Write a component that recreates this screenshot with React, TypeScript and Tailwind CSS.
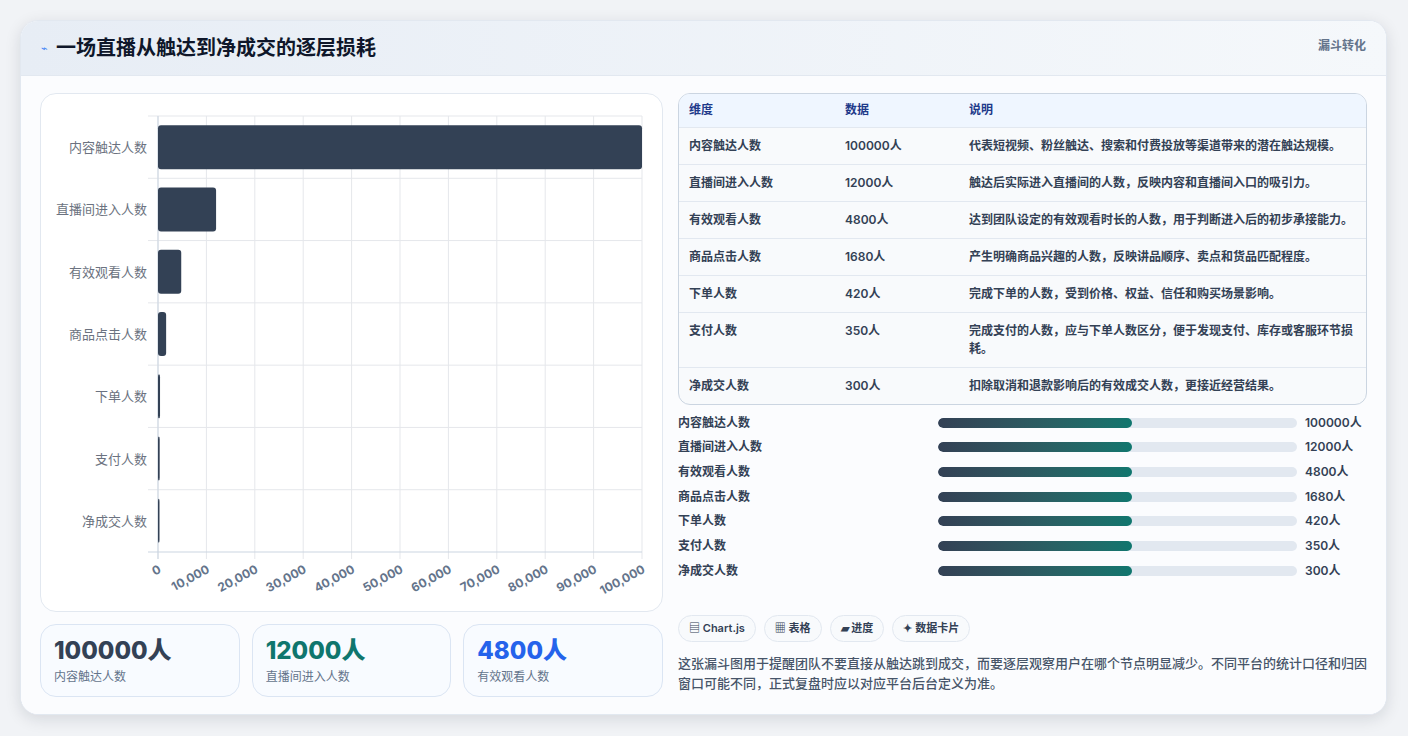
const rows = [
  { name: '内容触达人数', value: 100000, desc: '代表短视频、粉丝触达、搜索和付费投放等渠道带来的潜在触达规模。' },
  { name: '直播间进入人数', value: 12000, desc: '触达后实际进入直播间的人数，反映内容和直播间入口的吸引力。' },
  { name: '有效观看人数', value: 4800, desc: '达到团队设定的有效观看时长的人数，用于判断进入后的初步承接能力。' },
  { name: '商品点击人数', value: 1680, desc: '产生明确商品兴趣的人数，反映讲品顺序、卖点和货品匹配程度。' },
  { name: '下单人数', value: 420, desc: '完成下单的人数，受到价格、权益、信任和购买场景影响。' },
  { name: '支付人数', value: 350, desc: '完成支付的人数，应与下单人数区分，便于发现支付、库存或客服环节损耗。' },
  { name: '净成交人数', value: 300, desc: '扣除取消和退款影响后的有效成交人数，更接近经营结果。' },
];

const font = { fontFamily: 'Inter, "Noto Sans CJK SC", sans-serif' };

function FunnelChart() {
  const x0 = 117, x1 = 601, y0 = 22, y1 = 458;
  const rh = (y1 - y0) / 7;
  const ticks = Array.from({ length: 11 }, (_, i) => i);
  return (
    <svg width="623" height="518" className="block" style={font}>
      {ticks.map((i) => {
        const x = x0 + ((x1 - x0) * i) / 10;
        return <line key={i} x1={x} x2={x} y1={y0} y2={y1 + 7} stroke="#e5e7eb" />;
      })}
      {Array.from({ length: 8 }, (_, i) => (
        <line key={i} x1={x0 - 10} x2={x1} y1={y0 + rh * i} y2={y0 + rh * i} stroke={i === 7 ? '#cbd5e1' : '#e5e7eb'} />
      ))}
      <line x1={x0} x2={x0} y1={y0} y2={y1 + 7} stroke="#cbd5e1" />
      {rows.map((r, i) => {
        const w = Math.max(1.5, ((x1 - x0) * r.value) / 100000);
        const cy = y0 + rh * i + rh / 2;
        return (
          <g key={r.name}>
            <rect x={x0} y={cy - 22} width={w} height={44} rx={3} fill="#334155" />
            <text x={106} y={cy + 5} textAnchor="end" fontSize="13" fill="#6b7280">{r.name}</text>
          </g>
        );
      })}
      {ticks.map((i) => {
        const x = x0 + ((x1 - x0) * i) / 10;
        const label = i === 0 ? '0' : (i * 10000).toLocaleString('en-US');
        return (
          <text key={i} x={x + 4} y={y1 + 20} textAnchor="end" fontSize="12" fontWeight="700" fill="#64748b" transform={`rotate(-28 ${x + 4} ${y1 + 20})`}>
            {label}
          </text>
        );
      })}
    </svg>
  );
}

function StatCard({ value, label, color }: { value: string; label: string; color: string }) {
  return (
    <div className="flex-1 h-[73px] rounded-2xl border border-[#dbe5f3] bg-[#f8fbff] px-[13px] pt-[10px]">
      <div className={`text-[24px] font-extrabold leading-[32px] ${color}`}>{value}</div>
      <div className="text-[12px] text-[#64748b] mt-[1px]">{label}</div>
    </div>
  );
}

export default function App() {
  return (
    <div className="min-h-screen w-[1408px] h-[736px] bg-[#f1f3f6] pt-[20px] px-[20px]" style={font}>
      <div className="w-[1367px] h-[695px] rounded-[18px] bg-white shadow-[0_4px_16px_rgba(15,23,42,0.12)] border border-[#e2e8f0] overflow-hidden flex flex-col">
        <div className="h-[55px] shrink-0 flex items-center justify-between pl-[20px] pr-[20px] bg-gradient-to-r from-[#e7edf5] to-[#f5f8fb] border-b border-[#e2e8f0]">
          <div className="flex items-center gap-[8px]">
            <span className="text-[11px] text-[#3b82f6]">⌁</span>
            <span className="text-[20px] font-bold text-[#0f172a]">一场直播从触达到净成交的逐层损耗</span>
          </div>
          <span className="text-[12px] font-semibold text-[#64748b] self-start mt-[16px]">漏斗转化</span>
        </div>
        <div className="flex-1 bg-[#fbfcfe] flex gap-[15px] px-[19px] pt-[17px]">
          <div className="w-[623px] flex flex-col gap-[12px]">
            <div className="h-[519px] rounded-2xl border border-[#e2e8f0] bg-white">
              <FunnelChart />
            </div>
            <div className="flex gap-[12px]">
              <StatCard value="100000人" label="内容触达人数" color="text-[#334155]" />
              <StatCard value="12000人" label="直播间进入人数" color="text-[#0f766e]" />
              <StatCard value="4800人" label="有效观看人数" color="text-[#2563eb]" />
            </div>
          </div>
          <div className="w-[690px] flex flex-col">
            <div className="rounded-xl border border-[#cbd5e1] overflow-hidden bg-[#f8fafc]">
              <table className="w-full text-[12px] border-collapse">
                <thead>
                  <tr className="bg-[#eff6ff] text-[#1e3a8a] h-[33px]">
                    <th className="text-left font-semibold pl-[10px] w-[166px]">维度</th>
                    <th className="text-left font-semibold w-[124px]">数据</th>
                    <th className="text-left font-semibold pr-[10px]">说明</th>
                  </tr>
                </thead>
                <tbody>
                  {rows.map((r) => (
                    <tr key={r.name} className="border-t border-[#e2e8f0] text-[#334155] font-semibold">
                      <td className="pl-[10px] py-[9px] align-top leading-[17px]">{r.name}</td>
                      <td className="py-[9px] align-top leading-[17px]">{r.value}人</td>
                      <td className="py-[9px] pr-[12px] align-top leading-[18px]">{r.desc}</td>
                    </tr>
                  ))}
                </tbody>
              </table>
            </div>
            <div className="mt-[12px] flex flex-col gap-[12.7px]">
              {rows.map((r) => (
                <div key={r.name} className="flex items-center h-[12px] text-[12px] font-semibold text-[#334155]">
                  <span className="w-[260px]">{r.name}</span>
                  <div className="w-[359px] h-[10px] rounded-full bg-[#e2e8f0] overflow-hidden">
                    <div className="w-[194px] h-full rounded-full bg-gradient-to-r from-[#334155] to-[#0f766e]" />
                  </div>
                  <span className="ml-[8px]">{r.value}人</span>
                </div>
              ))}
            </div>
            <div className="mt-[38px] flex gap-[8px] text-[11px] font-semibold text-[#334155]">
              {['▤ Chart.js', '▦ 表格', '▰ 进度', '✦ 数据卡片'].map((c) => (
                <span key={c} className="h-[27px] px-[10px] flex items-center rounded-full border border-[#e2e8f0] bg-[#f8fafc]">{c}</span>
              ))}
            </div>
            <p className="mt-[11px] text-[13px] leading-[20px] text-[#475569] font-medium">
              这张漏斗图用于提醒团队不要直接从触达跳到成交，而要逐层观察用户在哪个节点明显减少。不同平台的统计口径和归因窗口可能不同，正式复盘时应以对应平台后台定义为准。
            </p>
          </div>
        </div>
      </div>
    </div>
  );
}
